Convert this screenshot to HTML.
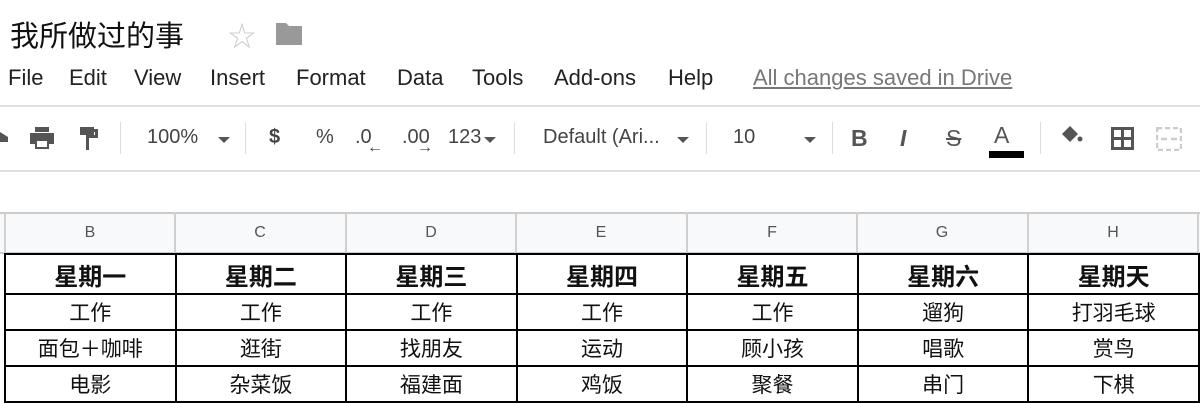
<!DOCTYPE html>
<html><head><meta charset="utf-8"><style>
*{margin:0;padding:0;box-sizing:border-box}
body{width:1200px;height:403px;overflow:hidden;background:#fff;font-family:"Liberation Sans","Noto Sans CJK SC",sans-serif;position:relative;color:#222}
.a{position:absolute;white-space:nowrap}
.menu span{position:absolute;top:65px;font-size:22px;color:#222}
.tb{position:absolute;top:105px;left:0;width:1200px;height:67px;border-top:2px solid #e0e0e0;border-bottom:2px solid #e0e0e0}
.t{position:absolute;font-size:20px;color:#444;top:126px}
.sep{position:absolute;top:122px;width:1px;height:32px;background:#ddd}
.dd{position:absolute;top:137px;width:0;height:0;border-left:6px solid transparent;border-right:6px solid transparent;border-top:6px solid #555}
.hdr{position:absolute;top:212px;left:0;width:1200px;height:42px;background:#f8f9fa;border-top:2px solid #ccc;border-bottom:2px solid #ccc}
.hl{position:absolute;top:212px;width:2px;height:42px;background:#d0d0d0}
.hc{position:absolute;top:224px;font-size:16px;color:#555;width:170px;text-align:center}
table{position:absolute;left:4px;top:253px;border-collapse:collapse}
td{border:2px solid #000;width:170.6px;text-align:center;font-size:21px;color:#111;height:36px;padding:0}
tr.h td{font-weight:bold;font-size:24px;height:40px}
</style></head><body>
<div class="a" style="left:10px;top:13px;font-size:29px;color:#111">我所做过的事</div>
<div class="a" style="left:228px;top:15px;font-size:28px;color:#ccc">☆</div>
<svg class="a" style="left:275px;top:21px" width="28" height="25" viewBox="0 0 28 25"><path d="M1 2h10l3 3h13v19H1z" fill="#999"/></svg>
<div class="menu">
<span style="left:8px">File</span><span style="left:69px">Edit</span><span style="left:134px">View</span><span style="left:210px">Insert</span><span style="left:296px">Format</span><span style="left:397px">Data</span><span style="left:472px">Tools</span><span style="left:554px">Add-ons</span><span style="left:668px">Help</span>
<span style="left:753px;color:#777;text-decoration:underline">All changes saved in Drive</span>
</div>
<div class="tb"></div>
<svg class="a" style="left:0;top:130px" width="10" height="14"><path d="M0 2l8 5v5H0z" fill="#555"/></svg>
<svg class="a" style="left:28px;top:126px" width="28" height="24" viewBox="0 0 28 24"><path d="M7 1h14v5H7z M2 7h24v11h-5v5H7v-5H2z" fill="#555"/><rect x="9" y="15" width="10" height="6" fill="#fff"/></svg>
<svg class="a" style="left:78px;top:125px" width="24" height="26" viewBox="0 0 24 26"><path d="M2 2h14v8H2z M16 4h4v9h-9v12h-3V10h9V7h-1z" fill="#555"/></svg>
<div class="sep" style="left:120px"></div>
<div class="t" style="left:147px">100%</div><div class="dd" style="left:218px"></div>
<div class="sep" style="left:245px"></div>
<div class="t" style="left:269px;font-weight:bold">$</div>
<div class="t" style="left:316px">%</div>
<div class="t" style="left:355px">.0</div><div class="a" style="left:367px;top:139px;font-size:16px;color:#444;font-weight:bold">←</div>
<div class="t" style="left:402px">.00</div><div class="a" style="left:417px;top:139px;font-size:16px;color:#444;font-weight:bold">→</div>
<div class="t" style="left:448px">123</div><div class="dd" style="left:484px"></div>
<div class="sep" style="left:514px"></div>
<div class="t" style="left:543px">Default (Ari...</div><div class="dd" style="left:677px"></div>
<div class="sep" style="left:706px"></div>
<div class="t" style="left:733px">10</div><div class="dd" style="left:804px"></div>
<div class="sep" style="left:832px"></div>
<div class="t" style="left:851px;font-weight:bold;font-size:23px;top:125px;color:#555">B</div>
<div class="t" style="left:900px;font-style:italic;font-weight:bold;font-size:23px;top:125px;color:#555">I</div>
<div class="t" style="left:946px;font-size:23px;top:125px;color:#555;text-decoration:line-through">S</div>
<div class="t" style="left:994px;font-size:23px;top:122px;color:#555">A</div>
<div class="a" style="left:989px;top:151px;width:35px;height:7px;background:#000"></div>
<div class="sep" style="left:1040px"></div>
<svg class="a" style="left:1058px;top:124px" width="26" height="24" viewBox="0 0 26 24"><path d="M4 10l8-8 8 8-8 8z" fill="#555"/><circle cx="22" cy="15" r="2.5" fill="#555"/></svg>
<svg class="a" style="left:1111px;top:127px" width="23" height="23" viewBox="0 0 23 23"><path d="M1.5 1.5h20v20h-20zM11.5 1.5v20M1.5 11.5h20" stroke="#555" stroke-width="3" fill="none"/></svg>
<svg class="a" style="left:1156px;top:127px" width="26" height="24" viewBox="0 0 26 24"><path d="M1 1h24v22H1z" stroke="#ccc" stroke-width="2.5" fill="none" stroke-dasharray="5 3"/><path d="M5 12h6M21 12h-6" stroke="#ccc" stroke-width="2.5"/></svg>
<div class="hdr"></div>
<div class="hl" style="left:4px"></div><div class="hl" style="left:174px"></div><div class="hl" style="left:345px"></div><div class="hl" style="left:515px"></div><div class="hl" style="left:686px"></div><div class="hl" style="left:856px"></div><div class="hl" style="left:1027px"></div><div class="hl" style="left:1197px"></div>
<div class="hc" style="left:5px">B</div><div class="hc" style="left:175px">C</div><div class="hc" style="left:346px">D</div><div class="hc" style="left:516px">E</div><div class="hc" style="left:687px">F</div><div class="hc" style="left:857px">G</div><div class="hc" style="left:1028px">H</div>
<table>
<tr class="h"><td>星期一</td><td>星期二</td><td>星期三</td><td>星期四</td><td>星期五</td><td>星期六</td><td>星期天</td></tr>
<tr><td>工作</td><td>工作</td><td>工作</td><td>工作</td><td>工作</td><td>遛狗</td><td>打羽毛球</td></tr>
<tr><td>面包＋咖啡</td><td>逛街</td><td>找朋友</td><td>运动</td><td>顾小孩</td><td>唱歌</td><td>赏鸟</td></tr>
<tr><td>电影</td><td>杂菜饭</td><td>福建面</td><td>鸡饭</td><td>聚餐</td><td>串门</td><td>下棋</td></tr>
</table>
</body></html>
